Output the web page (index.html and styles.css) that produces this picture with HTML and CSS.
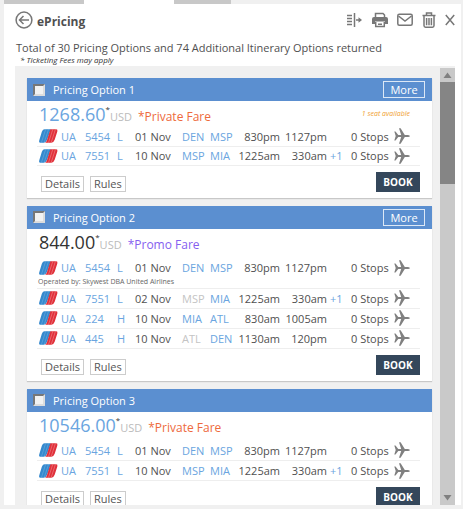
FILE: index.html
```html
<!DOCTYPE html>
<html lang="en">
<head>
    <meta charset="UTF-8">
    <meta name="viewport" content="width=device-width, initial-scale=1.0">
    <title>ePricing</title>
    <link rel="stylesheet" href="styles.css">
</head>
<body>
    <!-- shared icons -->
    <svg class="defs" aria-hidden="true">
        <symbol id="united" viewBox="0 0 20 14">
            <path d="M6 0H12.500L8.500 11Q7.500 14 5 14H1.500Q-.5 14 .3 11.500L3 2.500Q4 0 6 0Z" fill="#3489ce"/>
            <path d="M12 0H18Q20 0 19.300 2.200L16.500 11Q15.500 14 13 14H6.500Q8 13 8.500 11Z" fill="#e0303a"/>
            <path d="M7 0L2.500 14M10 0L5.500 14" stroke="#8fc0e6" stroke-width=".4" fill="none"/>
            <path d="M14.500 0L10 14M17.300 0L12.800 14" stroke="#f4a3a3" stroke-width=".5" fill="none"/>
        </symbol>
        <symbol id="plane" viewBox="0 0 16 16">
            <path d="M.3 3.500H1.500L4.300 6.900H7.200L5 .3H6.600L10.800 6.900H14Q15.900 7.200 15.900 8Q15.900 8.800 14 9.100H10.800L6.600 15.700H5L7.200 9.100H4.300L1.500 12.500H.3L1.700 8Z" fill="#808080"/>
        </symbol>
    </svg>

    <nav>
        <span class="tab"></span>
        <span class="tab active"></span>
        <span class="tab"></span>
    </nav>
    <main>
        <header>
            <button class="icon" aria-label="Back">
                <svg width="18" height="18" viewBox="0 0 18 18"><circle cx="9" cy="9" r="7.900"/><path d="M14 9H4.500M8.500 5L4.500 9L8.500 13"/></svg>
            </button>
            <h1>ePricing</h1>
            <div class="tools">
                <button class="icon" aria-label="Compare">
                    <svg width="17" height="16" viewBox="0 0 17 16"><path d="M1 3.500H6M1 6.500H6M1 9.500H6M1 12.500H6M8.500 1V15"/><path d="M10 8H13" /><path d="M12.500 5.300L16 8L12.500 10.700Z" fill="#777" stroke="none"/></svg>
                </button>
                <button class="icon" aria-label="Print">
                    <svg width="16" height="16" viewBox="0 0 16 16"><path d="M3.500 5V1.500H11L12.500 3V5"/><path d="M2 5H14Q16 5 16 7V12H13V9.500H3V12H0V7Q0 5 2 5Z" fill="#777" stroke="none"/><path d="M3.700 10V14.500H12.300V10M6 12.200H10"/></svg>
                </button>
                <button class="icon" aria-label="Mail">
                    <svg width="16" height="14" viewBox="0 0 16 14"><rect x=".8" y="1.300" width="14.400" height="11" rx="1.500"/><path d="M1.500 3L8 8L14.500 3"/></svg>
                </button>
                <button class="icon" aria-label="Delete">
                    <svg width="14" height="16" viewBox="0 0 14 16"><path d="M.5 3.500H13.500M4.500 3V1H9.500V3M2 4V13.500Q2 15.200 3.500 15.200H10.500Q12 15.200 12 13.500V4M4.600 6V13.200M7 6V13.200M9.400 6V13.200"/></svg>
                </button>
                <button class="icon" aria-label="Close">
                    <svg width="10" height="12" viewBox="0 0 10 12"><path d="M.8 1L9.200 11M9.200 1L.8 11"/></svg>
                </button>
            </div>
        </header>
        <p class="total">Total of 30 Pricing Options and 74 Additional Itinerary Options returned</p>
        <p class="note">* Ticketing Fees may apply</p>

        <div class="results">
            <div class="list">
                <section class="card compact">
                    <div class="title">
                        <input type="checkbox" id="opt1">
                        <label for="opt1">Pricing Option 1</label>
                        <button class="more">More</button>
                    </div>
                    <div class="price">
                        <span class="amount">1268.60</span><sup>*</sup><span class="currency">USD</span>
                        <span class="fare">*Private Fare</span>
                        <span class="seats">1 seat available</span>
                    </div>
                    <table>
                        <tr>
                            <td class="logo"><svg><use href="#united"/></svg></td>
                            <td class="carrier">UA</td><td class="number">5454</td><td class="cabin">L</td>
                            <td class="date">01 Nov</td><td class="city">DEN</td><td class="city">MSP</td>
                            <td class="depart">830pm</td><td class="arrive">1127pm</td><td class="days"></td>
                            <td class="stops">0 Stops</td><td class="plane"><svg><use href="#plane"/></svg></td>
                        </tr>
                        <tr>
                            <td class="logo"><svg><use href="#united"/></svg></td>
                            <td class="carrier">UA</td><td class="number">7551</td><td class="cabin">L</td>
                            <td class="date">10 Nov</td><td class="city">MSP</td><td class="city">MIA</td>
                            <td class="depart">1225am</td><td class="arrive">330am</td><td class="days">+1</td>
                            <td class="stops">0 Stops</td><td class="plane"><svg><use href="#plane"/></svg></td>
                        </tr>
                    </table>
                    <div class="actions">
                        <button>Details</button>
                        <button>Rules</button>
                        <button class="book">BOOK</button>
                    </div>
                </section>

                <section class="card">
                    <div class="title">
                        <input type="checkbox" id="opt2">
                        <label for="opt2">Pricing Option 2</label>
                        <button class="more">More</button>
                    </div>
                    <div class="price">
                        <span class="amount public">844.00</span><sup>*</sup><span class="currency">USD</span>
                        <span class="fare promo">*Promo Fare</span>
                    </div>
                    <table>
                        <tr class="operated">
                            <td class="logo"><svg><use href="#united"/></svg></td>
                            <td class="carrier">UA</td><td class="number">5454</td><td class="cabin">L</td>
                            <td class="date">01 Nov</td><td class="city">DEN</td><td class="city">MSP</td>
                            <td class="depart">830pm</td><td class="arrive">1127pm</td><td class="days"></td>
                            <td class="stops">0 Stops</td><td class="plane"><svg><use href="#plane"/></svg></td>
                        </tr>
                        <tr class="operator">
                            <td colspan="12">Operated by: Skywest DBA United Airlines</td>
                        </tr>
                        <tr>
                            <td class="logo"><svg><use href="#united"/></svg></td>
                            <td class="carrier">UA</td><td class="number">7551</td><td class="cabin">L</td>
                            <td class="date">02 Nov</td><td class="city via">MSP</td><td class="city">MIA</td>
                            <td class="depart">1225am</td><td class="arrive">330am</td><td class="days">+1</td>
                            <td class="stops">0 Stops</td><td class="plane"><svg><use href="#plane"/></svg></td>
                        </tr>
                        <tr>
                            <td class="logo"><svg><use href="#united"/></svg></td>
                            <td class="carrier">UA</td><td class="number">224</td><td class="cabin">H</td>
                            <td class="date">10 Nov</td><td class="city">MIA</td><td class="city">ATL</td>
                            <td class="depart">830am</td><td class="arrive">1005am</td><td class="days"></td>
                            <td class="stops">0 Stops</td><td class="plane"><svg><use href="#plane"/></svg></td>
                        </tr>
                        <tr>
                            <td class="logo"><svg><use href="#united"/></svg></td>
                            <td class="carrier">UA</td><td class="number">445</td><td class="cabin">H</td>
                            <td class="date">10 Nov</td><td class="city via">ATL</td><td class="city">DEN</td>
                            <td class="depart">1130am</td><td class="arrive">120pm</td><td class="days"></td>
                            <td class="stops">0 Stops</td><td class="plane"><svg><use href="#plane"/></svg></td>
                        </tr>
                    </table>
                    <div class="actions">
                        <button>Details</button>
                        <button>Rules</button>
                        <button class="book">BOOK</button>
                    </div>
                </section>

                <section class="card">
                    <div class="title">
                        <input type="checkbox" id="opt3">
                        <label for="opt3">Pricing Option 3</label>
                    </div>
                    <div class="price">
                        <span class="amount">10546.00</span><sup>*</sup><span class="currency">USD</span>
                        <span class="fare">*Private Fare</span>
                    </div>
                    <table>
                        <tr>
                            <td class="logo"><svg><use href="#united"/></svg></td>
                            <td class="carrier">UA</td><td class="number">5454</td><td class="cabin">L</td>
                            <td class="date">01 Nov</td><td class="city">DEN</td><td class="city">MSP</td>
                            <td class="depart">830pm</td><td class="arrive">1127pm</td><td class="days"></td>
                            <td class="stops">0 Stops</td><td class="plane"><svg><use href="#plane"/></svg></td>
                        </tr>
                        <tr>
                            <td class="logo"><svg><use href="#united"/></svg></td>
                            <td class="carrier">UA</td><td class="number">7551</td><td class="cabin">L</td>
                            <td class="date">10 Nov</td><td class="city">MSP</td><td class="city">MIA</td>
                            <td class="depart">1225am</td><td class="arrive">330am</td><td class="days">+1</td>
                            <td class="stops">0 Stops</td><td class="plane"><svg><use href="#plane"/></svg></td>
                        </tr>
                    </table>
                    <div class="actions">
                        <button>Details</button>
                        <button>Rules</button>
                        <button class="book">BOOK</button>
                    </div>
                </section>
            </div>
            <div class="scrollbar">
                <svg width="15" height="14" viewBox="0 0 15 14"><path d="M3.500 10L7.500 4.500L11.500 10Z"/></svg>
                <div class="track"><div class="thumb"></div></div>
                <svg width="15" height="14" viewBox="0 0 15 14"><path d="M3.500 4L7.500 9.500L11.500 4Z"/></svg>
            </div>
        </div>
    </main>
</body>
</html>
```

FILE: styles.css
```css
:root {
    --blue: #5b8fd0;
    --link: #6aa5e0;
    --text: #505050;
    --grey: #f0f0f0;
}

* {
    box-sizing: border-box;
}

body {
    margin: 0;
    height: 100vh;
    padding: 0 2px 4px 4px;
    display: flex;
    flex-direction: column;
    background-color: var(--grey);
    color: var(--text);
    font-family: "Open Sans", "Noto Sans", sans-serif;
    font-size: 11px;
}

button {
    font-family: inherit;
    cursor: pointer;
}

.defs {
    display: none;
}

nav {
    display: flex;
    height: 4px;
}

.tab {
    width: 57px;
    background-color: #c8c8c8;
}

.tab:first-child {
    width: 80px;
}

.tab.active {
    width: 90px;
    background-color: white;
}

main {
    flex: 1;
    min-height: 0;
    display: flex;
    flex-direction: column;
    background-color: white;
}

header {
    display: flex;
    align-items: center;
    height: 32px;
    padding: 0 6px 0 11px;
}

h1 {
    flex: 1;
    margin: 2px 0 0 4px;
    font-size: 12px;
    font-weight: bold;
}

.icon {
    display: block;
    padding: 0;
    border: none;
    background: none;
}

.icon svg {
    display: block;
    fill: none;
    stroke: #777;
    stroke-width: 1.5;
}

.tools {
    display: flex;
    align-items: center;
    gap: 9px;
}

.total {
    margin: 4px 0 0 12px;
    font-size: 11px;
    line-height: 16px;
    white-space: nowrap;
}

.note {
    margin: 0 0 2px 16px;
    font-size: 8px;
    line-height: 8px;
    font-style: italic;
    color: #333;
}

.results {
    flex: 1;
    min-height: 0;
    display: flex;
    margin: 0 6px 0 11px;
    background-color: var(--grey);
}

.list {
    flex: 1;
    overflow: hidden;
    padding: 12px 8px 0 12px;
}

.card {
    margin-bottom: 8px;
    background-color: white;
    box-shadow: 0 1px 1px #c8c8c8;
}

.title {
    display: flex;
    align-items: center;
    height: 23px;
    padding: 0 7px 0 6px;
    background-color: var(--blue);
    color: white;
}

.title label {
    flex: 1;
    margin-left: 8px;
}

.title input {
    appearance: none;
    width: 12px;
    height: 12px;
    margin: 0;
    background-color: #f2f2f2;
    border: 2px solid;
    border-color: #777 #ddd #ddd #777;
}

.more {
    width: 42px;
    height: 17px;
    padding: 0;
    border: 1px solid #dce8f6;
    background: none;
    color: white;
    font-size: 11px;
    line-height: 15px;
}

.price {
    display: flex;
    align-items: baseline;
    height: 29px;
    padding: 0 22px 0 12px;
    line-height: 26px;
}

.compact .price {
    height: 26px;
}

.amount {
    font-size: 18px;
    color: var(--link);
}

.amount.public {
    color: #333;
}

.price sup {
    align-self: flex-start;
    padding-top: 4px;
    font-size: 8px;
    line-height: 8px;
    color: #333;
}

.currency {
    font-size: 11px;
    color: #bbb;
}

.fare {
    flex: 1;
    margin-left: 6px;
    font-size: 12px;
    color: #ee6a3c;
}

.fare.promo {
    color: #8560f0;
}

.seats {
    align-self: flex-start;
    font-size: 7px;
    font-style: italic;
    color: #f0a030;
}

table {
    width: calc(100% - 22px);
    margin: 0 12px 0 10px;
    table-layout: fixed;
    border-collapse: collapse;
}

td {
    height: 20px;
    padding: 0;
    border-bottom: 1px solid #eee;
    line-height: 15px;
    white-space: nowrap;
}

.compact td {
    height: 19px;
}

.operated td {
    border-bottom: none;
}

.operator td {
    height: 10px;
    padding: 0 0 2px 1px;
    font-size: 7px;
    line-height: 8px;
    color: #666;
}

td svg {
    display: block;
}

.logo {
    width: 24px;
    padding-left: 2px;
}

.logo svg {
    width: 19px;
    height: 14px;
}

.carrier {
    width: 24px;
}

.number {
    width: 32px;
}

.cabin {
    width: 18px;
}

.carrier, .number, .cabin, .city, .days {
    color: var(--link);
}

.date {
    width: 47px;
}

.city {
    width: 28px;
}

.city.via {
    color: #c4c4c4;
}

.depart, .arrive {
    text-align: right;
}

.depart {
    width: 42px;
}

.arrive {
    width: 47px;
}

.days {
    width: 24px;
    padding-left: 3px;
}

.stops {
    width: 43px;
}

.plane svg {
    width: 16px;
    height: 16px;
}

.actions {
    display: flex;
    align-items: center;
    gap: 6px;
    height: 32px;
    padding: 4px 12px 0 14px;
}

.actions button {
    height: 16px;
    padding: 0 3px;
    border: 1px solid #ccc;
    background-color: white;
    color: #555;
    font-size: 11px;
    line-height: 14px;
}

.actions .book {
    width: 44px;
    height: 20px;
    margin: 0 0 4px auto;
    padding: 0;
    border: none;
    background-color: #34475b;
    color: white;
    font-size: 10px;
    font-weight: bold;
}

.scrollbar {
    width: 15px;
    margin-top: 2px;
    display: flex;
    flex-direction: column;
    background-color: #c9c9c9;
}

.scrollbar svg {
    fill: #808080;
}

.track {
    flex: 1;
}

.thumb {
    height: 25%;
    background-color: #858585;
}
```
